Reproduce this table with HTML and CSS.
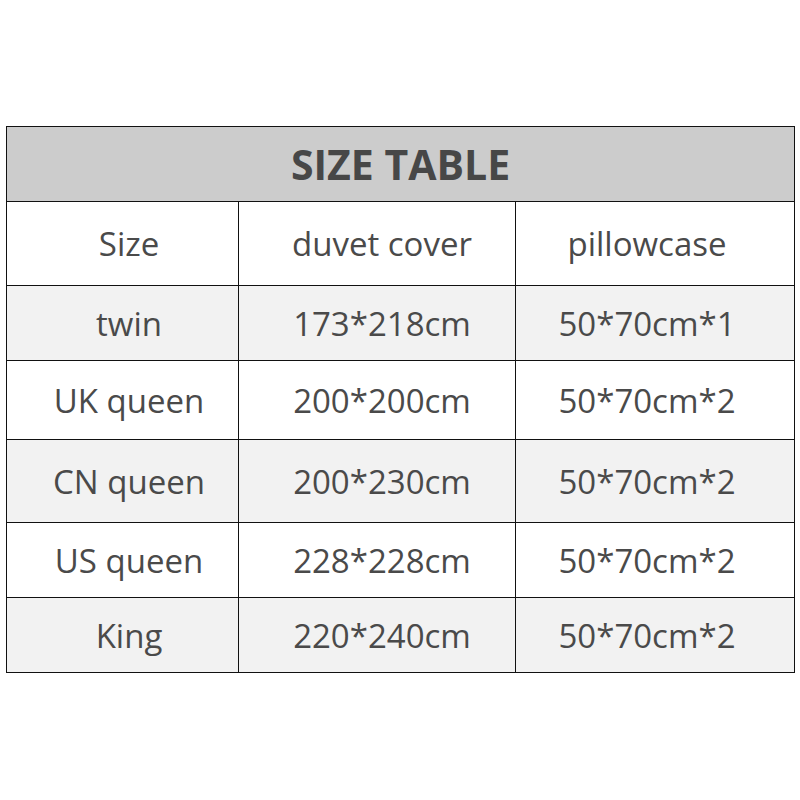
FILE: index.html
```html
<!DOCTYPE html>
<html>
<head>
<meta charset="utf-8">
<link rel="stylesheet" href="styles.css">
</head>
<body>
<div class="page">
<table class="size-table">
  <colgroup><col class="c1"><col class="c2"><col class="c3"></colgroup>
  <tr class="title-row"><th colspan="3">SIZE TABLE</th></tr>
  <tr class="r1"><td>Size</td><td>duvet cover</td><td>pillowcase</td></tr>
  <tr class="r2 alt"><td>twin</td><td>173*218cm</td><td>50*70cm*1</td></tr>
  <tr class="r3"><td>UK queen</td><td>200*200cm</td><td>50*70cm*2</td></tr>
  <tr class="r4 alt"><td>CN queen</td><td>200*230cm</td><td>50*70cm*2</td></tr>
  <tr class="r5"><td>US queen</td><td>228*228cm</td><td>50*70cm*2</td></tr>
  <tr class="r6 alt"><td>King</td><td>220*240cm</td><td>50*70cm*2</td></tr>
</table>
</div>
</body>
</html>
```
FILE: styles.css
```css
html, body { margin: 0; padding: 0; background: #fff; }
.page { padding: 126px 6px 0 6px; }
.size-table {
  width: 788px;
  border-collapse: collapse;
  table-layout: fixed;
  font-family: "Open Sans", "Noto Sans", sans-serif;
  color: #4a4a4a;
}
.c1 { width: 232px; }
.c2 { width: 277px; }
.c3 { width: 279px; }
.size-table th, .size-table td {
  border: 1px solid #111;
  text-align: center;
  vertical-align: middle;
  padding: 0;
}
.title-row th {
  background: #cccccc;
  height: 74px;
  font-size: 41px;
  font-weight: 700;
  color: #474747;
}
.size-table td { font-size: 33px; font-weight: 400; white-space: nowrap; }
.size-table td:nth-child(1) { padding-left: 13px; }
.size-table td:nth-child(2) { padding-left: 10px; }
.size-table td:nth-child(3) { padding-right: 16px; }
.r1 td { height: 83px; }
.r2 td { height: 74px; }
.r3 td { height: 78px; }
.r4 td { height: 82px; }
.r5 td { height: 74px; }
.r6 td { height: 74px; }
.alt td { background: #f2f2f2; }
```
